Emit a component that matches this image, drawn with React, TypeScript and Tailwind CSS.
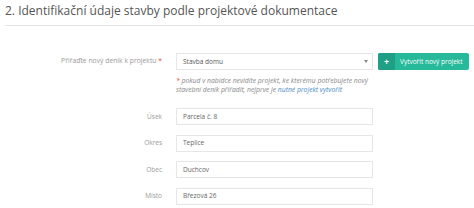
// Section 2 of the construction-diary form: project picker + location fields.
const FIELDS = [
  { label: "Úsek", value: "Parcela č. 8" },
  { label: "Okres", value: "Teplice" },
  { label: "Obec", value: "Duchcov" },
  { label: "Místo", value: "Březová 26" },
];

function Field({ label, value }: { label: string; value: string }) {
  return (
    <div className="flex items-center">
      <label className="w-[157px] shrink-0 text-right text-[6.5px] text-[#9a9a9a]">{label}</label>
      <div className="ml-[14px] flex h-[17px] w-[197px] items-center border border-[#e6e6e6] bg-white px-[6px] text-[6.5px] text-[#666]">
        {value}
      </div>
    </div>
  );
}

export default function App() {
  return (
    <div className="h-[208px] w-[474px] overflow-hidden bg-white pl-[5px] font-['Open_Sans',sans-serif]">
      <h2 className="border-b border-[#e5e5e5] pt-[1px] pb-[4px] text-[12px] leading-[20px] text-[#555]">
        2. Identifikační údaje stavby podle projektové dokumentace
      </h2>

      <div className="mt-[27px] flex items-center">
        <label className="w-[157px] shrink-0 text-right text-[6.8px] text-[#9a9a9a]">
          Přiřaďte nový deník k projektu <span className="text-[#e74c3c]">*</span>
        </label>
        <div className="ml-[14px] flex h-[17px] w-[197px] items-center justify-between border border-[#e6e6e6] bg-white pr-[4px] pl-[6px] text-[6.5px] text-[#555]">
          <span>Stavba domu</span>
          <svg width="4" height="3" viewBox="0 0 4 3" className="text-[#888]">
            <path d="M0 0h4L2 3z" fill="currentColor" />
          </svg>
        </div>
        <button className="ml-[5px] flex h-[17px] w-[91px] items-center rounded-[2px] bg-[#26b99a] text-[6.5px] font-medium text-white">
          <span className="flex h-full w-[17px] items-center justify-center rounded-l-[2px] bg-[#1f9f85] text-[9px] font-bold">+</span>
          <span className="ml-[5px]">Vytvořit nový projekt</span>
        </button>
      </div>

      <p className="mt-[5.5px] ml-[171px] w-[205px] text-[6.8px] leading-[9.5px] text-[#888] italic">
        <span className="text-[#e74c3c]">*</span> pokud v nabídce nevidíte projekt, ke kterému potřebujete nový
        stavební deník přiřadit, nejprve je <a className="text-[#4a8ac4]">nutné projekt vytvořit</a>
      </p>

      <div className="mt-[13.5px] flex flex-col gap-[9.5px]">
        {FIELDS.map((f) => (
          <Field key={f.label} label={f.label} value={f.value} />
        ))}
      </div>
    </div>
  );
}
